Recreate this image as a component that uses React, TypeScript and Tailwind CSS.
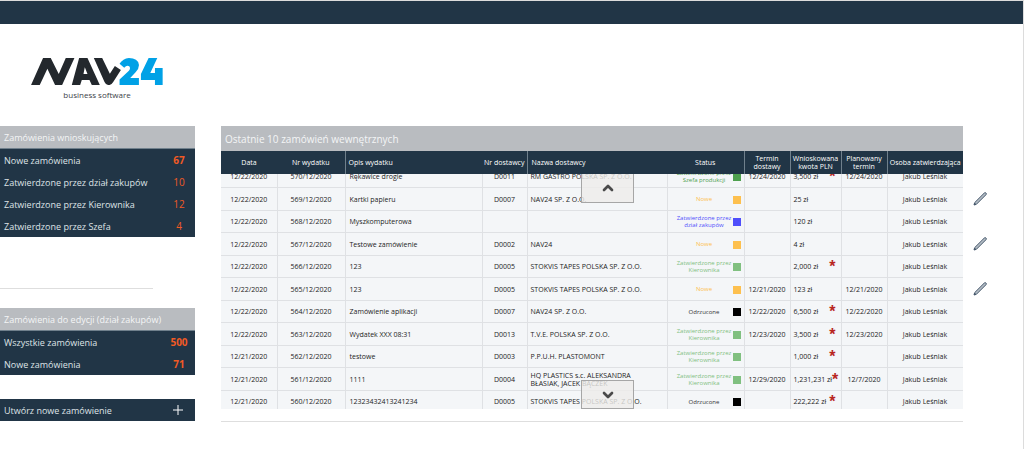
import React from "react";
import { FiChevronDown, FiChevronUp } from "react-icons/fi";

type Status = "new" | "boss" | "purchasing" | "manager" | "rejected";

type Order = {
  date: string;
  no: string;
  description: string;
  vendorNo?: string;
  vendor?: string;
  status: Status;
  due?: string;
  amount: string;
  flagged?: boolean;
  planned?: string;
};

type MenuItem = {
  label: string;
  count: number;
  bold?: boolean;
};

const statuses: Record<Status, { label: string; text: string; box: string }> = {
  new: { label: "Nowe", text: "text-[#fdc04f]", box: "bg-[#fdc04f]" },
  boss: {
    label: "Zatwierdzone przez Szefa produkcji",
    text: "text-[#4ea04e]",
    box: "bg-[#4ea04e]",
  },
  purchasing: {
    label: "Zatwierdzone przez dział zakupów",
    text: "text-[#4f4ffb]",
    box: "bg-[#4f4ffb]",
  },
  manager: {
    label: "Zatwierdzone przez Kierownika",
    text: "text-[#80c080]",
    box: "bg-[#80c080]",
  },
  rejected: { label: "Odrzucone", text: "text-[#333333]", box: "bg-black" },
};

const orders: Order[] = [
  { date: "12/22/2020", no: "570/12/2020", description: "Rękawice drogie", vendorNo: "D0011", vendor: "RM GASTRO POLSKA SP. Z O.O.", status: "boss", due: "12/24/2020", amount: "3,500 zł", flagged: true, planned: "12/24/2020" },
  { date: "12/22/2020", no: "569/12/2020", description: "Kartki papieru", vendorNo: "D0007", vendor: "NAV24 SP. Z O.O.", status: "new", amount: "25 zł" },
  { date: "12/22/2020", no: "568/12/2020", description: "Myszkomputerowa", status: "purchasing", amount: "120 zł" },
  { date: "12/22/2020", no: "567/12/2020", description: "Testowe zamówienie", vendorNo: "D0002", vendor: "NAV24", status: "new", amount: "4 zł" },
  { date: "12/22/2020", no: "566/12/2020", description: "123", vendorNo: "D0005", vendor: "STOKVIS TAPES POLSKA SP. Z O.O.", status: "manager", amount: "2,000 zł", flagged: true },
  { date: "12/22/2020", no: "565/12/2020", description: "123", vendorNo: "D0005", vendor: "STOKVIS TAPES POLSKA SP. Z O.O.", status: "new", due: "12/21/2020", amount: "123 zł", planned: "12/21/2020" },
  { date: "12/22/2020", no: "564/12/2020", description: "Zamówienie aplikacji", vendorNo: "D0007", vendor: "NAV24 SP. Z O.O.", status: "rejected", due: "12/22/2020", amount: "6,500 zł", flagged: true, planned: "12/22/2020" },
  { date: "12/22/2020", no: "563/12/2020", description: "Wydatek XXX 08:31", vendorNo: "D0013", vendor: "T.V.E. POLSKA SP. Z O.O.", status: "manager", due: "12/23/2020", amount: "3,500 zł", flagged: true, planned: "12/23/2020" },
  { date: "12/21/2020", no: "562/12/2020", description: "testowe", vendorNo: "D0003", vendor: "P.P.U.H. PLASTOMONT", status: "manager", amount: "1,000 zł", flagged: true },
  { date: "12/21/2020", no: "561/12/2020", description: "1111", vendorNo: "D0004", vendor: "HQ PLASTICS s.c. ALEKSANDRA BŁASIAK, JACEK BĄCZEK", status: "manager", due: "12/29/2020", amount: "1,231,231 zł", flagged: true, planned: "12/7/2020" },
  { date: "12/21/2020", no: "560/12/2020", description: "12323432413241234", vendorNo: "D0005", vendor: "STOKVIS TAPES POLSKA SP. Z O.O.", status: "rejected", amount: "222,222 zł", flagged: true },
];

const Logo = () => (
  <div className="w-[132px]">
    <svg viewBox="95 174 395 82" className="block w-full" role="img" aria-label="NAV24">
      <g fill="#23282d">
        <path d="M95 255 L131 174 H154 L178 222 L199 174 H225 L188 255 H167 L144 206 L121 255 Z" />
        <path
          fillRule="evenodd"
          d="M217 255 L239 174 H264 L301 255 H277 L270 240 H247 L242 255 Z M252 222 H264 L256 202 Z"
        />
        <path d="M283 174 H308 L331 221 L346 198 L364 210 L341 246 Q336 255 328 255 Q319 255 315 246 Z" />
      </g>
      <g fill="#00a1e6">
        <path d="M360 191 Q370 176 388 174 Q415 174 418 194 Q419 206 408 217 L392 234 H418 V255 H360 V238 L388 212 Q394 205 389 199 Q382 194 374 203 Z" />
        <path d="M447 174 H473 L452 219 H466 V204 H489 V255 H466 V240 H424 V222 Z" />
      </g>
    </svg>
    <p className="mt-1 text-center text-[8px] leading-3 text-[#3c4248]">business software</p>
  </div>
);

const Menu = ({ title, items }: { title: string; items: MenuItem[] }) => (
  <section>
    <h2 className="h-[23px] border-b border-[#70808c] bg-[#b9bcc0] pl-1 text-[9px] leading-6 text-[#f4f5f6]">
      {title}
    </h2>
    <ul className="bg-[#213546]">
      {items.map((item) => (
        <li key={item.label} className="h-[22px]">
          <a href="#" className="flex h-full items-center justify-between pt-px pr-1 pl-1 text-[9px] text-[#dfe3e6]">
            {item.label}
            <span className={`w-6 text-center text-[10px] text-[#f15a24] ${item.bold ? "font-bold" : "font-normal"}`}>
              {item.count}
            </span>
          </a>
        </li>
      ))}
    </ul>
  </section>
);

const Columns = () => (
  <colgroup>
    <col className="w-[56px]" />
    <col className="w-[68px]" />
    <col className="w-[137px]" />
    <col className="w-[45px]" />
    <col className="w-[140px]" />
    <col className="w-[77px]" />
    <col className="w-[46px]" />
    <col className="w-[51px]" />
    <col className="w-[46px]" />
    <col className="w-[76px]" />
  </colgroup>
);

const Pencil = () => (
  <svg viewBox="0 0 42 42" className="size-[14px]" aria-hidden="true">
    <path
      d="M3 39 L5 32 L34 3 Q37 1 39 3 Q41 5 39 8 L10 37 Z"
      fill="#b4bdc5"
      stroke="#44566a"
      strokeWidth="3"
      strokeLinejoin="round"
    />
    <path d="M3 39 L5 32 L10 37 Z" fill="#44566a" />
  </svg>
);

const OrderRow = ({ order }: { order: Order }) => {
  const status = statuses[order.status];

  return (
    <tr className="odd:h-[22px] even:h-[23px] [&>td]:border-r [&>td]:border-b [&>td]:border-[#dfe1e4] [&>td]:p-0 [&>td]:pt-0.5">
      <td className="text-center">{order.date}</td>
      <td className="text-center">{order.no}</td>
      <td>
        <div className="pl-1">{order.description}</div>
      </td>
      <td className="text-center">{order.vendorNo}</td>
      <td>
        <div className="pr-4 pl-[3px] leading-2">{order.vendor}</div>
      </td>
      <td>
        <div className="flex items-center pr-[3px] pl-2">
          <span className={`flex-1 text-center text-[6px] leading-[7px] ${status.text}`}>{status.label}</span>
          <span className={`size-2 shrink-0 ${status.box}`} />
        </div>
      </td>
      <td className="text-center">{order.due}</td>
      <td>
        <div className="flex h-3 items-center justify-between pr-[5px] pl-[3px] whitespace-nowrap">
          {order.amount}
          {order.flagged && (
            <span className="font-['Liberation_Sans'] text-base leading-4 font-bold text-[#b8261f]">*</span>
          )}
        </div>
      </td>
      <td className="text-center">{order.planned}</td>
      <td className="text-center">Jakub Leśniak</td>
    </tr>
  );
};

const App = () => {
  return (
    <div className="min-h-screen border-t border-r border-[#dcdcdc] bg-white font-['Open_Sans',sans-serif]">
      <header className="h-[23px] bg-[#213546]" />
      <div className="pt-[34px] pl-[31px]">
        <Logo />
      </div>
      <div className="mt-[25px] flex items-start">
        <aside className="w-[195px] shrink-0">
          <Menu
            title="Zamówienia wnioskujących"
            items={[
              { label: "Nowe zamówienia", count: 67, bold: true },
              { label: "Zatwierdzone przez dział zakupów", count: 10 },
              { label: "Zatwierdzone przez Kierownika", count: 12 },
              { label: "Zatwierdzone przez Szefa", count: 4 },
            ]}
          />
          <hr className="mt-[51px] mb-[19px] w-[153px] border-[#dedede]" />
          <Menu
            title="Zamówienia do edycji (dział zakupów)"
            items={[
              { label: "Wszystkie zamówienia", count: 500, bold: true },
              { label: "Nowe zamówienia", count: 71, bold: true },
            ]}
          />
          <button className="mt-6 flex h-[22px] w-full items-center justify-between bg-[#213546] pr-3 pl-1 text-[9px] text-[#dfe3e6]">
            Utwórz nowe zamówienie
            <svg viewBox="0 0 10 10" className="size-[10px]" aria-hidden="true">
              <path d="M5 0V10M0 5H10" stroke="white" />
            </svg>
          </button>
        </aside>

        <main className="ml-[26px] min-w-0 flex-1">
          <h1 className="h-[25px] bg-[#b9bcc0] pl-1 text-[10px] leading-[26px] text-[#f4f5f6]">
            Ostatnie 10 zamówień wewnętrznych
          </h1>
          <table className="w-full table-fixed bg-[#213546] text-[7px] leading-2 text-white">
            <Columns />
            <thead>
              <tr className="h-[23px] [&>th]:p-0 [&>th]:font-normal">
                <th>Data</th>
                <th>Nr wydatku</th>
                <th className="border-l border-[#70808c] text-left">
                  <div className="pl-[3px]">Opis wydatku</div>
                </th>
                <th className="whitespace-nowrap">Nr dostawcy</th>
                <th className="border-l border-[#70808c] text-left">
                  <div className="pl-1">Nazwa dostawcy</div>
                </th>
                <th>Status</th>
                <th className="border-l border-[#70808c]">Termin dostawy</th>
                <th className="border-l border-[#70808c]">Wnioskowana kwota PLN</th>
                <th className="border-l border-[#70808c]">Planowany termin</th>
                <th className="border-l border-[#70808c] whitespace-nowrap">Osoba zatwierdzająca</th>
              </tr>
            </thead>
          </table>
          <div className="relative h-[235px] overflow-hidden">
            <table className="-mt-[9px] w-full table-fixed bg-[#f4f6f8] text-[7px] leading-2 text-[#1c1c1c]">
              <Columns />
              <tbody>
                {orders.map((order) => (
                  <OrderRow key={order.no} order={order} />
                ))}
              </tbody>
            </table>
            <button
              aria-label="Przewiń w górę"
              className="absolute top-0 left-[360px] flex h-[29px] w-[53px] items-center justify-center border border-t-0 border-[#a6a6a6] bg-[#eeecea]/80 text-[#4a4a4a]"
            >
              <FiChevronUp className="size-4" strokeWidth={4} />
            </button>
            <button
              aria-label="Przewiń w dół"
              className="absolute bottom-0 left-[360px] flex h-[29px] w-[53px] items-center justify-center border border-[#a6a6a6] bg-[#eeecea]/80 text-[#4a4a4a]"
            >
              <FiChevronDown className="size-4" strokeWidth={4} />
            </button>
          </div>
          <hr className="mt-3 border-[#dedede]" />
        </main>

        <div className="w-[60px] shrink-0 pt-[39px]">
          {orders.map((order) => (
            <div key={order.no} className="flex items-center pl-[10px] odd:h-[22px] even:h-[23px]">
              {order.status === "new" && (
                <button aria-label={`Edytuj ${order.no}`}>
                  <Pencil />
                </button>
              )}
            </div>
          ))}
        </div>
      </div>
    </div>
  );
};

export default App;
